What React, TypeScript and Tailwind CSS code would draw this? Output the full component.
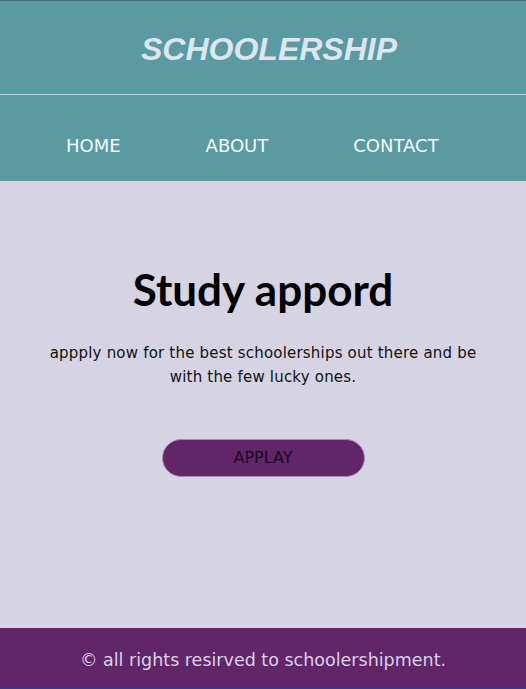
export default function App() {
  return (
    <div className="w-[526px] h-[689px] flex flex-col bg-[#d6d4e2] border-t border-t-[#4a6870] border-b border-b-[#2a3f8f]" style={{ fontFamily: '"DejaVu Sans", Verdana, sans-serif' }}>
      <header className="bg-[#5b9aa0]">
        <div className="h-[94px] flex items-center justify-center border-b border-b-[#b4d3d6] pt-[3px] pl-[12px]">
          <h1 className="text-[32px] font-bold italic text-[#dce6ee]" style={{ fontFamily: '"Liberation Sans", Arial, sans-serif' }}>SCHOOLERSHIP</h1>
        </div>
        <nav className="h-[86px] flex items-center pl-[66px] pt-[14px] gap-[85px] text-[18px] text-[#f4fbfb]">
          <span>HOME</span>
          <span>ABOUT</span>
          <span>CONTACT</span>
        </nav>
      </header>
      <main className="flex-1 flex flex-col items-center">
        <h2 className="mt-[83px] text-[44px] leading-[50px] font-bold text-black" style={{ fontFamily: 'Lato, "DejaVu Sans", sans-serif' }}>Study appord</h2>
        <p className="mt-[27px] text-[15px] leading-[24px] tracking-[0.2px] text-[#111] text-center">appply now for the best schoolerships out there and be<br />with the few lucky ones.</p>
        <button className="mt-[50px] w-[203px] h-[38px] rounded-full bg-[#622569] border border-[#a98aaf] text-[16px] text-[#1a0a22]">APPLAY</button>
      </main>
      <footer className="h-[60px] bg-[#622569] flex items-center justify-center pt-[4px] text-[17.5px] text-[#d8d2e6]">
        © all rights resirved to schoolershipment.
      </footer>
    </div>
  );
}
